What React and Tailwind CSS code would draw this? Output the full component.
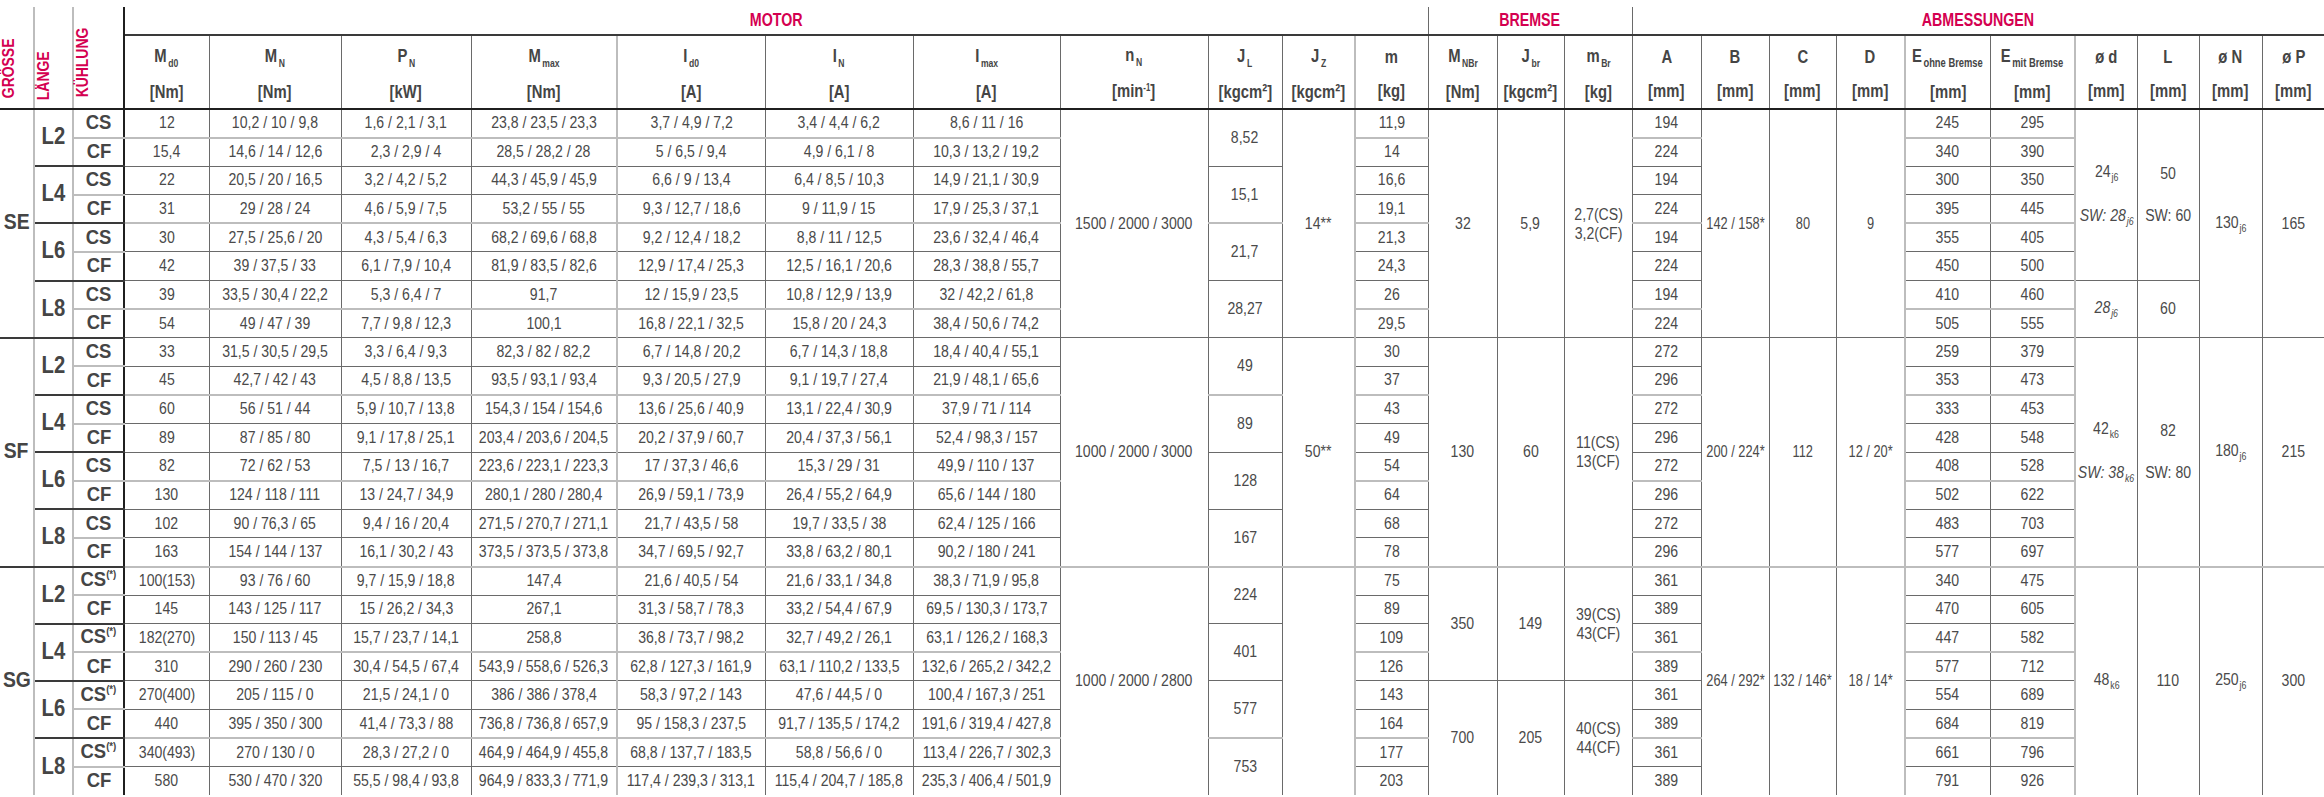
import React from "react";

const colW = ["w-[34px]","w-[39px]","w-[51px]","w-[85px]","w-[132px]","w-[130px]","w-[146px]","w-[148px]","w-[148px]","w-[147px]","w-[148px]","w-[74px]","w-[73px]","w-[73px]","w-[69px]","w-[67px]","w-[68px]","w-[69px]","w-[68px]","w-[67px]","w-[69px]","w-[85px]","w-[85px]","w-[62px]","w-[62px]","w-[63px]","w-[62px]"];

const RIGHT = {
  g: "border-r-2 border-r-[#bdbdbd]",
  d: "border-r border-r-[#6a6a6a]",
  k: "border-r-2 border-r-[#1f1f1f]",
  n: "",
};
const colRight = "ggkdddgdddddgdddddddgdgdddn".split("");

const B_GREY = "border-b-2 border-b-[#bdbdbd]";
const B_DARK = "border-b border-b-[#6a6a6a]";
const B_DARK2 = "border-b-2 border-b-[#3a3a3a]";

function bottom(col, end) {
  if (end === 24) return "";
  if (col <= 1) return B_DARK2;
  if (col === 2) return end % 2 === 0 ? B_DARK2 : B_GREY;
  return end % 3 === 1 ? B_GREY : B_DARK;
}

/* condensed text: Liberation Sans narrowed horizontally; symmetric negative margins keep it centred */
const N = ({ children, className = "scale-x-[0.88]" }) => (
  <span className={`-mx-[20px] inline-block whitespace-nowrap ${className}`}>{children}</span>
);

function Td({ col, start, span = 1, children, narrow = false }) {
  const end = start + span - 1;
  return (
    <td rowSpan={span} className={`whitespace-nowrap p-0 text-center align-middle ${RIGHT[colRight[col]]} ${bottom(col, end)}`}>
      <N className={narrow ? "scale-x-[0.8]" : "scale-x-[0.88]"}>{children}</N>
    </td>
  );
}

const Sub = ({ children }) => <span className="relative top-[4px] ml-[1px] text-[10px]">{children}</span>;

const Two = ({ a, b }) => (
  <div className="flex flex-col items-center gap-[22px] leading-[20px]">
    <span>{a}</span>
    <span>{b}</span>
  </div>
);

const Pair = ({ a, b }) => (
  <div className="flex flex-col items-center leading-[19px]">
    <span>{a}</span>
    <span>{b}</span>
  </div>
);

const groups = [
  {
    name: "SE",
    star: false,
    rows: [
      ["12","10,2/10/9,8","1,6/2,1/3,1","23,8/23,5/23,3","3,7/4,9/7,2","3,4/4,4/6,2","8,6/11/16","11,9","194","245","295"],
      ["15,4","14,6/14/12,6","2,3/2,9/4","28,5/28,2/28","5/6,5/9,4","4,9/6,1/8","10,3/13,2/19,2","14","224","340","390"],
      ["22","20,5/20/16,5","3,2/4,2/5,2","44,3/45,9/45,9","6,6/9/13,4","6,4/8,5/10,3","14,9/21,1/30,9","16,6","194","300","350"],
      ["31","29/28/24","4,6/5,9/7,5","53,2/55/55","9,3/12,7/18,6","9/11,9/15","17,9/25,3/37,1","19,1","224","395","445"],
      ["30","27,5/25,6/20","4,3/5,4/6,3","68,2/69,6/68,8","9,2/12,4/18,2","8,8/11/12,5","23,6/32,4/46,4","21,3","194","355","405"],
      ["42","39/37,5/33","6,1/7,9/10,4","81,9/83,5/82,6","12,9/17,4/25,3","12,5/16,1/20,6","28,3/38,8/55,7","24,3","224","450","500"],
      ["39","33,5/30,4/22,2","5,3/6,4/7","91,7","12/15,9/23,5","10,8/12,9/13,9","32/42,2/61,8","26","194","410","460"],
      ["54","49/47/39","7,7/9,8/12,3","100,1","16,8/22,1/32,5","15,8/20/24,3","38,4/50,6/74,2","29,5","224","505","555"],
    ],
    jl: ["8,52", "15,1", "21,7", "28,27"],
    nN: "1500 / 2000 / 3000",
    jz: "14**",
    mnbr: [[0, 8, "32"]],
    jbr: [[0, 8, "5,9"]],
    mbr: [[0, 8, <Pair a="2,7(CS)" b="3,2(CF)" />]],
    B: "142 / 158*",
    C: "80",
    D: "9",
    d: [
      [0, 6, <Two a={<>24<Sub>j6</Sub></>} b={<i>SW: 28<Sub>j6</Sub></i>} />],
      [6, 2, <i>28<Sub>j6</Sub></i>],
    ],
    L: [
      [0, 6, <Two a="50" b="SW: 60" />],
      [6, 2, "60"],
    ],
    N: <>130<Sub>j6</Sub></>,
    P: "165",
  },
  {
    name: "SF",
    star: false,
    rows: [
      ["33","31,5/30,5/29,5","3,3/6,4/9,3","82,3/82/82,2","6,7/14,8/20,2","6,7/14,3/18,8","18,4/40,4/55,1","30","272","259","379"],
      ["45","42,7/42/43","4,5/8,8/13,5","93,5/93,1/93,4","9,3/20,5/27,9","9,1/19,7/27,4","21,9/48,1/65,6","37","296","353","473"],
      ["60","56/51/44","5,9/10,7/13,8","154,3/154/154,6","13,6/25,6/40,9","13,1/22,4/30,9","37,9/71/114","43","272","333","453"],
      ["89","87/85/80","9,1/17,8/25,1","203,4/203,6/204,5","20,2/37,9/60,7","20,4/37,3/56,1","52,4/98,3/157","49","296","428","548"],
      ["82","72/62/53","7,5/13/16,7","223,6/223,1/223,3","17/37,3/46,6","15,3/29/31","49,9/110/137","54","272","408","528"],
      ["130","124/118/111","13/24,7/34,9","280,1/280/280,4","26,9/59,1/73,9","26,4/55,2/64,9","65,6/144/180","64","296","502","622"],
      ["102","90/76,3/65","9,4/16/20,4","271,5/270,7/271,1","21,7/43,5/58","19,7/33,5/38","62,4/125/166","68","272","483","703"],
      ["163","154/144/137","16,1/30,2/43","373,5/373,5/373,8","34,7/69,5/92,7","33,8/63,2/80,1","90,2/180/241","78","296","577","697"],
    ],
    jl: ["49", "89", "128", "167"],
    nN: "1000 / 2000 / 3000",
    jz: "50**",
    mnbr: [[0, 8, "130"]],
    jbr: [[0, 8, "60"]],
    mbr: [[0, 8, <Pair a="11(CS)" b="13(CF)" />]],
    B: "200 / 224*",
    C: "112",
    D: "12 / 20*",
    d: [[0, 8, <Two a={<>42<Sub>k6</Sub></>} b={<i>SW: 38<Sub>k6</Sub></i>} />]],
    L: [[0, 8, <Two a="82" b="SW: 80" />]],
    N: <>180<Sub>j6</Sub></>,
    P: "215",
  },
  {
    name: "SG",
    star: true,
    rows: [
      ["100(153)","93/76/60","9,7/15,9/18,8","147,4","21,6/40,5/54","21,6/33,1/34,8","38,3/71,9/95,8","75","361","340","475"],
      ["145","143/125/117","15/26,2/34,3","267,1","31,3/58,7/78,3","33,2/54,4/67,9","69,5/130,3/173,7","89","389","470","605"],
      ["182(270)","150/113/45","15,7/23,7/14,1","258,8","36,8/73,7/98,2","32,7/49,2/26,1","63,1/126,2/168,3","109","361","447","582"],
      ["310","290/260/230","30,4/54,5/67,4","543,9/558,6/526,3","62,8/127,3/161,9","63,1/110,2/133,5","132,6/265,2/342,2","126","389","577","712"],
      ["270(400)","205/115/0","21,5/24,1/0","386/386/378,4","58,3/97,2/143","47,6/44,5/0","100,4/167,3/251","143","361","554","689"],
      ["440","395/350/300","41,4/73,3/88","736,8/736,8/657,9","95/158,3/237,5","91,7/135,5/174,2","191,6/319,4/427,8","164","389","684","819"],
      ["340(493)","270/130/0","28,3/27,2/0","464,9/464,9/455,8","68,8/137,7/183,5","58,8/56,6/0","113,4/226,7/302,3","177","361","661","796"],
      ["580","530/470/320","55,5/98,4/93,8","964,9/833,3/771,9","117,4/239,3/313,1","115,4/204,7/185,8","235,3/406,4/501,9","203","389","791","926"],
    ],
    jl: ["224", "401", "577", "753"],
    nN: "1000 / 2000 / 2800",
    jz: "",
    mnbr: [[0, 4, "350"], [4, 4, "700"]],
    jbr: [[0, 4, "149"], [4, 4, "205"]],
    mbr: [[0, 4, <Pair a="39(CS)" b="43(CF)" />], [4, 4, <Pair a="40(CS)" b="44(CF)" />]],
    B: "264 / 292*",
    C: "132 / 146*",
    D: "18 / 14*",
    d: [[0, 8, <>48<Sub>k6</Sub></>]],
    L: [[0, 8, "110"]],
    N: <>250<Sub>j6</Sub></>,
    P: "300",
  },
];

const fmt = (v) => v.split("/").join(" / ");

function buildRows() {
  const out = [];
  groups.forEach((g, gi) => {
    g.rows.forEach((vals, i) => {
      const r = gi * 8 + i + 1;
      const cells = [];
      const T = (col, span, content, narrow = false) =>
        cells.push(
          <Td key={col} col={col} start={r} span={span} narrow={narrow}>
            {content}
          </Td>
        );
      const spans = (col, list) =>
        list.forEach(([at, span, content]) => {
          if (at === i) T(col, span, content);
        });

      if (i === 0) T(0, 8, <span className="text-[22px] font-bold text-[#454545]">{g.name}</span>);
      if (i % 2 === 0) T(1, 2, <span className="text-[23px] font-bold text-[#454545]">{"L" + (i + 2)}</span>);
      T(
        2,
        1,
        <span className="text-[21px] font-bold text-[#454545]">
          {i % 2 === 0 ? "CS" : "CF"}
          {g.star && i % 2 === 0 ? <span className="relative top-[-8px] text-[11px]">(*)</span> : null}
        </span>
      );
      for (let k = 0; k < 7; k++) T(3 + k, 1, fmt(vals[k]));
      if (i === 0) T(10, 8, g.nN);
      if (i % 2 === 0) T(11, 2, g.jl[i / 2]);
      if (i === 0) T(12, 8, g.jz);
      T(13, 1, vals[7]);
      spans(14, g.mnbr);
      spans(15, g.jbr);
      spans(16, g.mbr);
      T(17, 1, vals[8]);
      if (i === 0) {
        T(18, 8, g.B, true);
        T(19, 8, g.C, true);
        T(20, 8, g.D, true);
      }
      T(21, 1, vals[9]);
      T(22, 1, vals[10]);
      spans(23, g.d);
      spans(24, g.L);
      if (i === 0) {
        T(25, 8, g.N);
        T(26, 8, g.P);
      }
      out.push(
        <tr key={r} className="h-[28.6px]">
          {cells}
        </tr>
      );
    });
  });
  return out;
}

const HEAD = [
  ["M", "d0", "[Nm]"],
  ["M", "N", "[Nm]"],
  ["P", "N", "[kW]"],
  ["M", "max", "[Nm]"],
  ["I", "d0", "[A]"],
  ["I", "N", "[A]"],
  ["I", "max", "[A]"],
  ["n", "N", <>[min<span className="relative top-[-6px] text-[10px]">-1</span>]</>],
  ["J", "L", "[kgcm²]"],
  ["J", "Z", "[kgcm²]"],
  ["m", "", "[kg]"],
  ["M", "NBr", "[Nm]"],
  ["J", "br", "[kgcm²]"],
  ["m", "Br", "[kg]"],
  ["A", "", "[mm]"],
  ["B", "", "[mm]"],
  ["C", "", "[mm]"],
  ["D", "", "[mm]"],
  ["E", "ohne Bremse", "[mm]"],
  ["E", "mit Bremse", "[mm]"],
  ["ø d", "", "[mm]"],
  ["L", "", "[mm]"],
  ["ø N", "", "[mm]"],
  ["ø P", "", "[mm]"],
];

const HB = "border-b-2 border-b-[#1f1f1f]";

function VLabel({ children }) {
  return (
    <div className="mx-auto rotate-180 scale-y-[0.82] whitespace-nowrap text-[17px] leading-none font-bold text-[#d40050] [writing-mode:vertical-rl]">
      {children}
    </div>
  );
}

const Title = ({ children }) => <N className="scale-x-[0.75] text-[19px] font-bold text-[#d40050]">{children}</N>;

export default function App() {
  return (
    <div className="h-[797px] w-[2324px] overflow-hidden bg-white pt-[7px]">
      <table className="w-[2324px] table-fixed border-collapse font-['Liberation_Sans',Arial,sans-serif] text-[16px] leading-[20px] text-[#4a4a4a]">
        <colgroup>
          {colW.map((w, i) => (
            <col key={i} className={w} />
          ))}
        </colgroup>
        <thead>
          <tr className="h-[28px]">
            <th rowSpan={2} className={`p-0 pb-[3px] align-bottom ${RIGHT.g} ${HB}`}>
              <VLabel>GRÖSSE</VLabel>
            </th>
            <th rowSpan={2} className={`p-0 pb-[3px] align-bottom ${RIGHT.g} ${HB}`}>
              <VLabel>LÄNGE</VLabel>
            </th>
            <th rowSpan={2} className={`p-0 pb-[3px] align-bottom ${RIGHT.k} ${HB}`}>
              <VLabel>KÜHLUNG</VLabel>
            </th>
            <th colSpan={11} className={`p-0 text-center ${RIGHT.d} ${B_DARK2}`}>
              <Title>MOTOR</Title>
            </th>
            <th colSpan={3} className={`p-0 text-center ${RIGHT.d} ${B_DARK2}`}>
              <Title>BREMSE</Title>
            </th>
            <th colSpan={10} className={`p-0 text-center ${B_DARK2}`}>
              <Title>ABMESSUNGEN</Title>
            </th>
          </tr>
          <tr className="h-[74px]">
            {HEAD.map(([sym, sub, unit], k) => (
              <th key={k} className={`p-0 align-middle font-bold text-[#454545] ${RIGHT[colRight[k + 3]]} ${HB}`}>
                <div className="flex flex-col items-center gap-[14px] pt-[4px] leading-[20px]">
                  <N className="scale-x-[0.78] text-[19px]">
                    {sym}
                    {sub ? (
                      <span className={`relative top-[5px] ml-[2px] ${sub.length > 4 ? "text-[12px]" : "text-[11px]"}`}>{sub}</span>
                    ) : null}
                  </N>
                  <N className="scale-x-[0.78] text-[19px]">{unit}</N>
                </div>
              </th>
            ))}
          </tr>
        </thead>
        <tbody>{buildRows()}</tbody>
      </table>
    </div>
  );
}
